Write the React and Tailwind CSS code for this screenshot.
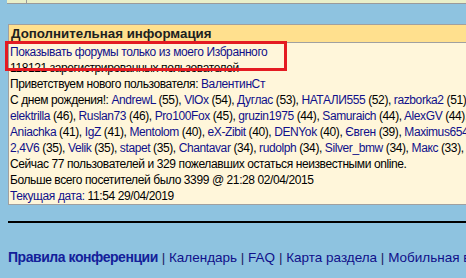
import React from "react";

const font = { fontFamily: "Tahoma, 'Liberation Sans', Arial, sans-serif" };

function L({ children }) {
  return <span className="text-[#10108a]">{children}</span>;
}

function People({ list }) {
  return list.map(([name, age], i) => (
    <React.Fragment key={i}>
      <L>{name}</L> ({age}),{" "}
    </React.Fragment>
  ));
}

export default function App() {
  return (
    <div
      className="relative w-[466px] h-[278px] overflow-hidden bg-[#8ec3e0] text-black"
      style={font}
    >
      {/* bottom of previous row */}
      <div className="ml-[7px] flex h-[4px] border-b border-[#9a9a9a] bg-[#e9efc9]">
        <div className="w-[20px] border-r border-[#9a9a9a]" />
        <div className="flex-1" />
      </div>

      {/* info panel */}
      <div className="ml-[8px] mt-[20px] w-[600px] border border-[#a0a0a0] bg-[#fff6da] whitespace-nowrap">
        <div className="h-[18px] border-b border-[#a0a0a0] bg-[#ffe08e] pl-[2px] text-[13.3px] font-bold leading-[18px] text-[#202020]">
          Дополнительная информация
        </div>
        <div className="pl-[1px] pt-[1px] text-[12px] leading-[16px] tracking-[-0.4px]">
          <div><L>Показывать форумы только из моего Избранного</L></div>
          <div>118121 зарегистрированных пользователей</div>
          <div>
            Приветствуем нового пользователя: <L>ВалентинСт</L>
          </div>
          <div>
            С днем рождения!:{" "}
            <People
              list={[
                ["AndrewL", 55],
                ["VlOx", 54],
                ["Дуглас", 53],
                ["НАТАЛИ555", 52],
                ["razborka2", 51],
                ["kolyan", 50],
              ]}
            />
          </div>
          <div>
            <People
              list={[
                ["elektrilla", 46],
                ["Ruslan73", 46],
                ["Pro100Fox", 45],
                ["gruzin1975", 44],
                ["Samuraich", 44],
                ["AlexGV", 44],
                ["Kostik", 43],
              ]}
            />
          </div>
          <div>
            <People
              list={[
                ["Aniachka", 41],
                ["IgZ", 41],
                ["Mentolom", 40],
                ["eX-Zibit", 40],
                ["DENYok", 40],
                ["Євген", 39],
                ["Maximus654", 36],
              ]}
            />
          </div>
          <div>
            <People
              list={[
                ["2,4V6", 35],
                ["Velik", 35],
                ["stapet", 35],
                ["Chantavar", 34],
                ["rudolph", 34],
                ["Silver_bmw", 34],
                ["Макс", 33],
                ["andrey", 32],
              ]}
            />
          </div>
          <div>Сейчас 77 пользователей и 329 пожелавших остаться неизвестными online.</div>
          <div>Больше всего посетителей было 3399 @ 21:28 02/04/2015</div>
          <div>
            <L>Текущая дата:</L> 11:54 29/04/2019
          </div>
        </div>
      </div>

      <div className="ml-[8px] mt-[16px] h-[2px] bg-black" />

      <div className="ml-[8px] mt-[24px] whitespace-nowrap text-[13.5px] leading-[20px] text-[#10108a]">
        <b className="text-[14px] tracking-[-0.45px] text-[#13209a]">Правила конференции</b>
        <span className="text-[#202060]"> | </span>Календарь
        <span className="text-[#202060]"> | </span>FAQ
        <span className="text-[#202060]"> | </span>Карта раздела
        <span className="text-[#202060]"> | </span>Мобильная версия
      </div>

      {/* red annotation box */}
      <div className="absolute left-[5px] top-[41px] h-[30px] w-[282px] border-[3px] border-[#e41b22]" />
    </div>
  );
}
